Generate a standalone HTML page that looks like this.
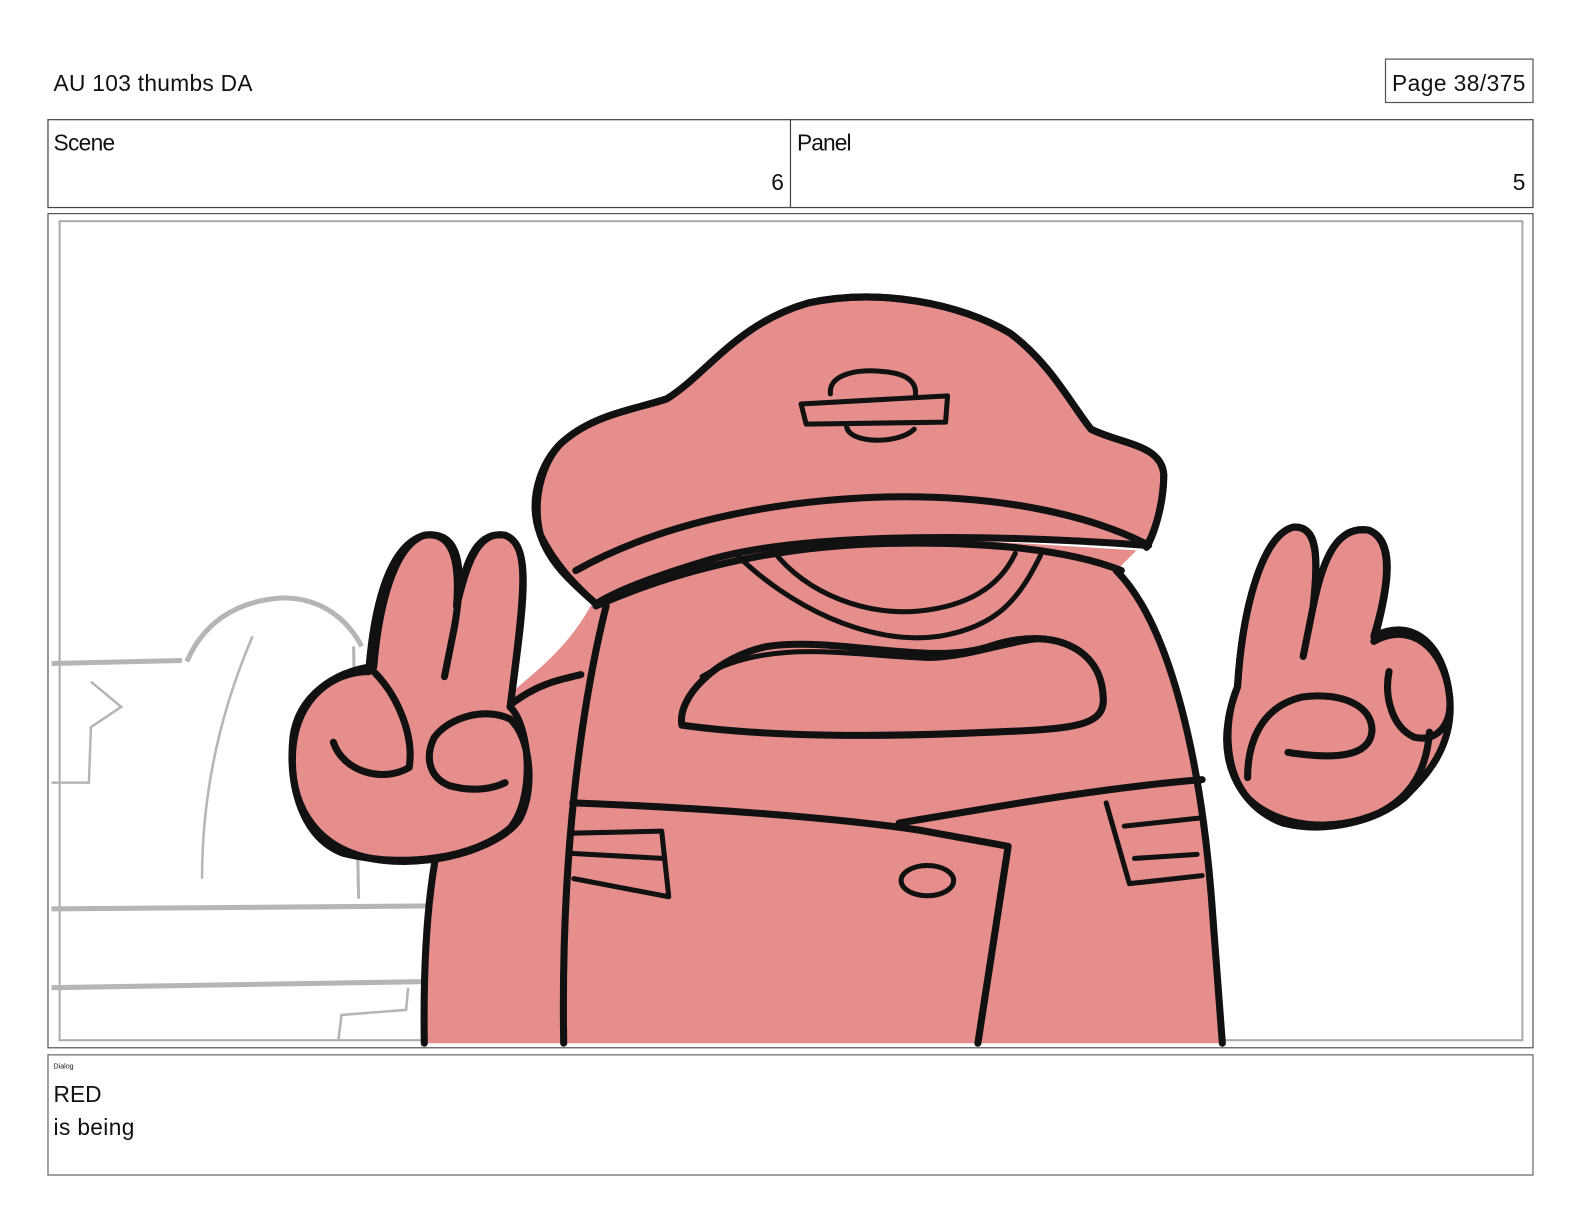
<!DOCTYPE html>
<html><head><style>
html,body{margin:0;padding:0;background:#fff;}
svg{display:block}
text{font-family:"Liberation Sans",sans-serif;fill:#111}
</style></head><body>
<svg width="1584" height="1224" viewBox="0 0 1568 1212" preserveAspectRatio="none" xmlns="http://www.w3.org/2000/svg">
<rect width="1568" height="1212" fill="#fff"/>
<text x="53" y="90" font-size="22.5" textLength="197">AU 103 thumbs DA</text>
<rect x="1371.5" y="58.5" width="146" height="43" fill="none" stroke="#555" stroke-width="1.2"/>
<text x="1378" y="90" font-size="22.5" textLength="132">Page  38/375</text>
<rect x="47.5" y="118.5" width="1470" height="87" fill="none" stroke="#444" stroke-width="1.2"/>
<line x1="782.5" y1="118" x2="782.5" y2="206" stroke="#444" stroke-width="1.2"/>
<text x="53" y="149" font-size="22.5" textLength="61">Scene</text>
<text x="776" y="188" font-size="22.5" text-anchor="end">6</text>
<text x="789" y="149" font-size="22.5" textLength="54">Panel</text>
<text x="1510" y="188" font-size="22.5" text-anchor="end">5</text>
<rect x="47.5" y="211.5" width="1470" height="826" fill="none" stroke="#555" stroke-width="1.2"/>
<rect x="59" y="219" width="1448" height="811" fill="none" stroke="#aaa" stroke-width="2"/>
<g fill="none" stroke="#b5b5b5" stroke-width="5">
<path d="M51 657 L180 654 M51 900 L430 897 M51 978 L420 972"/>
<path d="M185 655 C200 620 230 595 280 592 C320 592 345 615 358 640"/>
<path d="M250 630 C220 700 200 780 200 870" stroke-width="2.5"/>
<path d="M350 640 L355 890" stroke-width="3"/>
<path d="M90 675 L120 700 L90 720 L88 775 L51 775" stroke-width="2.5"/>
<path d="M335 1030 L338 1005 L402 1000 L404 978" stroke-width="2.5"/>
</g>
<g stroke="#111" stroke-width="7" stroke-linejoin="round" stroke-linecap="round">
<path fill="#e58e8c" d="M420 1033 C418 900 430 780 480 710 C520 670 560 650 590 590 L700 550 L880 530 L1125 545 L1105 565 C1160 620 1190 760 1200 900 L1210 1033 Z" stroke="none"/>
<path fill="none" d="M420 1033 C418 900 430 790 480 720 C520 680 545 675 575 668"/>
<path fill="none" d="M1105 565 C1160 620 1190 760 1200 900 L1210 1033"/>
<path fill="none" d="M600 600 C575 700 555 850 558 1033"/>
<path fill="none" d="M567 795 C700 800 830 810 910 822 L998 838 L968 1033"/>
<path fill="none" d="M890 815 C980 800 1090 780 1190 772"/>
<path fill="none" stroke-width="5" d="M565 825 L655 823 L662 888 L568 870 M565 845 L656 850"/>
<path fill="none" stroke-width="5" d="M1095 795 L1118 875 L1190 867 M1113 818 L1188 810 M1123 850 L1185 846"/>
<ellipse cx="918" cy="872" rx="26" ry="15" fill="none" stroke-width="5"/>
<path fill="none" d="M675 718 C670 690 710 650 760 640 C830 630 920 660 980 640 C1040 620 1090 640 1092 690 C1095 720 1060 722 980 725 C870 730 760 730 675 718 Z"/>
<path fill="none" stroke-width="5" d="M695 670 C760 630 850 650 920 652 C980 650 1030 620 1060 640"/>
<path fill="none" stroke-width="5" d="M728 548 C780 600 860 640 930 630 C990 620 1010 590 1030 550"/>
<path fill="none" stroke-width="5" d="M765 545 C800 590 860 610 910 605 C960 600 990 580 1005 548"/>
<path fill="#e58e8c" d="M535 530 C520 490 540 450 560 435 C590 410 630 405 660 395 C700 370 730 320 800 300 C870 285 950 300 1000 330 C1040 360 1060 400 1080 425 C1110 440 1150 440 1152 470 C1152 500 1142 530 1135 540 C1000 530 800 525 700 555 C650 570 610 585 590 598 C570 580 550 560 535 530 Z"/>
<path fill="none" d="M590 598 C570 580 545 560 535 530 C525 490 540 450 560 435 C590 410 630 405 660 395 C700 370 730 320 800 300 C870 285 950 300 1000 330 C1040 360 1060 400 1080 425 C1110 440 1150 440 1152 470 C1152 500 1142 530 1135 542"/>
<path fill="none" d="M570 565 C650 520 760 495 880 492 C990 490 1080 510 1137 540"/>
<path fill="none" d="M590 600 C680 560 780 540 880 538 C980 536 1060 545 1110 565"/>
<path fill="none" stroke-width="5" d="M793 400 L938 392 L936 418 L798 420 Z M822 390 C820 370 850 365 875 368 C900 370 908 380 906 392 M838 422 C840 440 890 440 905 425"/>
<path fill="#e58e8c" d="M370 660 C375 600 390 540 420 530 C450 525 455 560 452 600 C460 560 470 525 500 530 C525 540 520 580 505 700 C525 720 530 790 505 820 C470 850 400 860 340 845 C300 830 285 780 290 730 C295 690 330 665 370 660 Z"/>
<path fill="none" d="M365 665 C370 600 385 540 420 530 C455 525 460 560 450 620 L440 670 M452 600 C462 560 472 525 500 530 C528 540 518 600 505 700"/>
<path fill="none" d="M365 665 C330 665 295 690 290 740 C285 800 315 845 380 852 C440 858 500 835 515 810 C530 780 525 730 505 712 C480 700 445 710 430 730 C420 750 425 770 445 778 C470 785 490 780 500 775"/>
<path fill="none" d="M370 665 C395 690 410 730 405 760 C380 775 340 765 330 735"/>
<path fill="#e58e8c" d="M1225 680 C1230 600 1250 530 1280 522 C1305 520 1305 550 1300 600 C1310 550 1325 520 1355 525 C1380 535 1375 580 1360 630 C1400 610 1430 640 1435 690 C1440 740 1410 770 1390 790 C1360 815 1310 825 1270 815 C1230 800 1210 760 1215 720 C1217 700 1222 690 1225 680 Z"/>
<path fill="none" d="M1225 680 C1230 600 1250 530 1280 522 C1305 520 1305 555 1300 600 L1290 650 M1300 600 C1310 550 1325 520 1355 525 C1382 535 1375 580 1360 635"/>
<path fill="none" d="M1225 680 C1212 710 1210 760 1235 790 C1265 820 1320 825 1365 805 C1395 790 1412 765 1415 725"/>
<path fill="none" d="M1360 635 C1395 615 1430 640 1435 690 C1438 720 1420 735 1400 730 C1378 720 1370 690 1375 665"/>
<path fill="none" d="M1235 770 C1235 740 1245 700 1290 690 C1330 685 1360 700 1358 725 C1355 750 1320 752 1275 745"/>
</g>
<rect x="47.5" y="1044.5" width="1470" height="119" fill="none" stroke="#666" stroke-width="1.2"/>
<text x="53" y="1058" font-size="7">Dialog</text>
<text x="53" y="1091" font-size="22.5">RED</text>
<text x="53" y="1124" font-size="22.5" textLength="80">is being</text>
</svg>
</body></html>
